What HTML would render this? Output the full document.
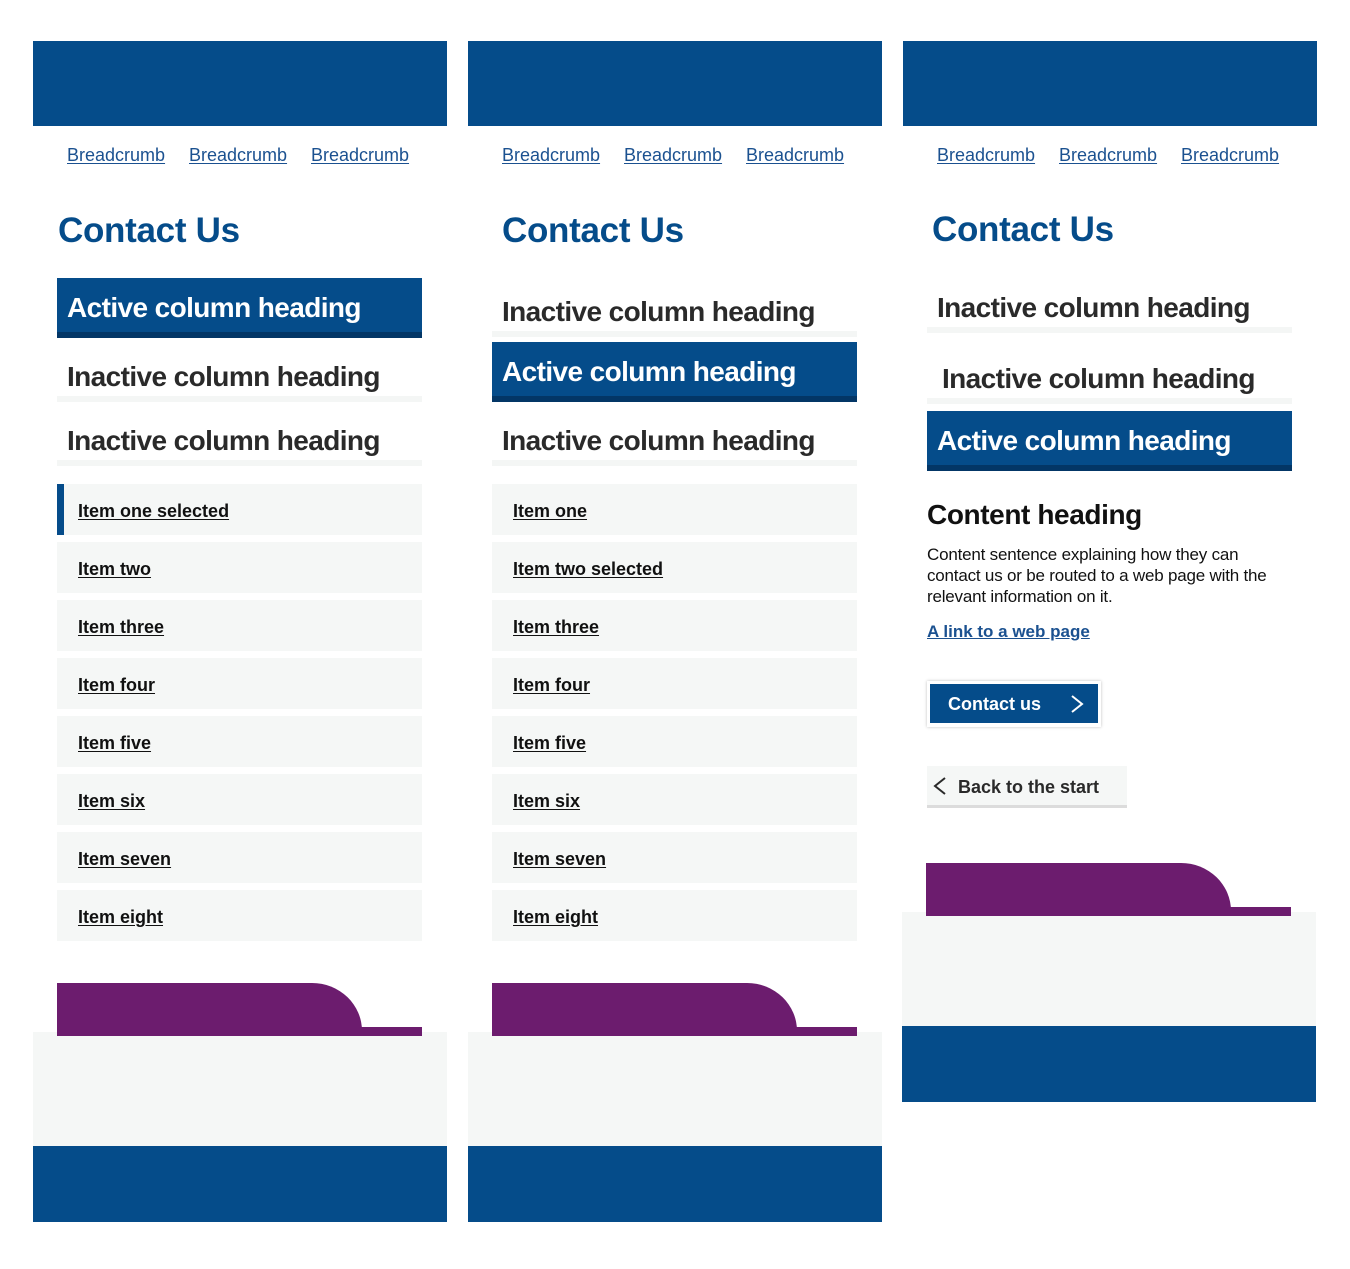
<!DOCTYPE html>
<html><head><meta charset="utf-8"><style>
*{margin:0;padding:0;box-sizing:border-box}
body{width:1350px;height:1269px;background:#fff;position:relative;font-family:"Liberation Sans",Arial,sans-serif;overflow:hidden}
.a{position:absolute}
.hdr{background:#054c8a;height:85px;width:414px;top:41px}
.bc{top:145px;font-size:18px;color:#1b5190;text-decoration:underline;text-underline-offset:2px}
.h1{font-size:35px;font-weight:bold;color:#054c8a;top:211px;letter-spacing:-0.3px}
.act{background:#054c8a;height:60px;width:365px;border-bottom:6px solid #033666;color:#fff;font-weight:bold;font-size:28px;padding:14px 10px 0;line-height:32px;letter-spacing:-0.6px}
.ina{width:365px;height:56px;border-bottom:6px solid #f4f6f5;color:#2a2a2a;font-weight:bold;font-size:28px;padding:15px 10px 0;line-height:32px;letter-spacing:-0.6px}
.it{width:365px;height:51px;background:#f5f7f6;font-size:18px;font-weight:bold;color:#111;padding:17px 21px 0;line-height:20px}
.it span{text-decoration:underline;text-underline-offset:2px}
.sel{border-left:7px solid #054c8a;padding-left:14px}
.pur{background:#6c1c6e;height:53px;border-top-right-radius:50px 48px}
.strip{background:#6c1c6e;height:9px}
.gr{background:#f5f7f6;width:414px;height:114px}
.ft{background:#054c8a;width:414px;height:76px}
</style></head><body>

<!-- Column 1 -->
<div class="a hdr" style="left:33px"></div>
<div class="a bc" style="left:67px">Breadcrumb</div>
<div class="a bc" style="left:189px">Breadcrumb</div>
<div class="a bc" style="left:311px">Breadcrumb</div>
<div class="a h1" style="left:58px">Contact Us</div>
<div class="a act" style="left:57px;top:278px">Active column heading</div>
<div class="a ina" style="left:57px;top:346px">Inactive column heading</div>
<div class="a ina" style="left:57px;top:410px">Inactive column heading</div>
<div class="a it sel" style="left:57px;top:484px"><span>Item one selected</span></div>
<div class="a it" style="left:57px;top:542px"><span>Item two</span></div>
<div class="a it" style="left:57px;top:600px"><span>Item three</span></div>
<div class="a it" style="left:57px;top:658px"><span>Item four</span></div>
<div class="a it" style="left:57px;top:716px"><span>Item five</span></div>
<div class="a it" style="left:57px;top:774px"><span>Item six</span></div>
<div class="a it" style="left:57px;top:832px"><span>Item seven</span></div>
<div class="a it" style="left:57px;top:890px"><span>Item eight</span></div>
<div class="a gr" style="left:33px;top:1032px"></div>
<div class="a ft" style="left:33px;top:1146px"></div>
<div class="a strip" style="left:300px;top:1027px;width:122px"></div>
<div class="a pur" style="left:57px;top:983px;width:305px"></div>

<!-- Column 2 -->
<div class="a hdr" style="left:468px"></div>
<div class="a bc" style="left:502px">Breadcrumb</div>
<div class="a bc" style="left:624px">Breadcrumb</div>
<div class="a bc" style="left:746px">Breadcrumb</div>
<div class="a h1" style="left:502px">Contact Us</div>
<div class="a ina" style="left:492px;top:281px">Inactive column heading</div>
<div class="a act" style="left:492px;top:342px">Active column heading</div>
<div class="a ina" style="left:492px;top:410px">Inactive column heading</div>
<div class="a it" style="left:492px;top:484px"><span>Item one</span></div>
<div class="a it" style="left:492px;top:542px"><span>Item two selected</span></div>
<div class="a it" style="left:492px;top:600px"><span>Item three</span></div>
<div class="a it" style="left:492px;top:658px"><span>Item four</span></div>
<div class="a it" style="left:492px;top:716px"><span>Item five</span></div>
<div class="a it" style="left:492px;top:774px"><span>Item six</span></div>
<div class="a it" style="left:492px;top:832px"><span>Item seven</span></div>
<div class="a it" style="left:492px;top:890px"><span>Item eight</span></div>
<div class="a gr" style="left:468px;top:1032px"></div>
<div class="a ft" style="left:468px;top:1146px"></div>
<div class="a strip" style="left:735px;top:1027px;width:122px"></div>
<div class="a pur" style="left:492px;top:983px;width:305px"></div>

<!-- Column 3 -->
<div class="a hdr" style="left:903px"></div>
<div class="a bc" style="left:937px">Breadcrumb</div>
<div class="a bc" style="left:1059px">Breadcrumb</div>
<div class="a bc" style="left:1181px">Breadcrumb</div>
<div class="a h1" style="left:932px;top:210px">Contact Us</div>
<div class="a ina" style="left:927px;top:277px">Inactive column heading</div>
<div class="a ina" style="left:927px;top:348px;padding-left:15px">Inactive column heading</div>
<div class="a act" style="left:927px;top:411px">Active column heading</div>
<div class="a" style="left:927px;top:499px;font-size:28px;font-weight:bold;color:#111;letter-spacing:-0.4px">Content heading</div>
<div class="a" style="left:927px;top:544px;width:350px;font-size:17px;line-height:21px;color:#111;letter-spacing:-0.2px">Content sentence explaining how they can contact us or be routed to a web page with the relevant information on it.</div>
<div class="a" style="left:927px;top:622px;font-size:17px;font-weight:bold;color:#1b5190;text-decoration:underline">A link to a web page</div>
<div class="a" style="left:927px;top:681px;width:174px;height:46px;background:#fff;box-shadow:0 0 3px rgba(0,0,0,.25);padding:3px">
 <div style="background:#054c8a;height:39px;color:#fff;font-weight:bold;font-size:18px;line-height:41px;padding-left:18px;position:relative">Contact us
  <svg style="position:absolute;right:14px;top:11px" width="14" height="18" viewBox="0 0 14 18"><path d="M2 1 L12 9 L2 17" fill="none" stroke="#fff" stroke-width="2"/></svg></div>
</div>
<div class="a" style="left:927px;top:766px;width:200px;height:42px;background:#f5f7f6;border-bottom:3px solid #dcdcdc;font-weight:bold;font-size:18px;color:#2a2a2a;line-height:42px;padding-left:31px">
 <svg style="position:absolute;left:6px;top:11px" width="14" height="18" viewBox="0 0 14 18"><path d="M12 1 L2 9 L12 17" fill="none" stroke="#2a2a2a" stroke-width="2"/></svg>Back to the start</div>
<div class="a gr" style="left:902px;top:912px"></div>
<div class="a ft" style="left:902px;top:1026px"></div>
<div class="a strip" style="left:1170px;top:907px;width:121px"></div>
<div class="a pur" style="left:926px;top:863px;width:305px"></div>
</body></html>
